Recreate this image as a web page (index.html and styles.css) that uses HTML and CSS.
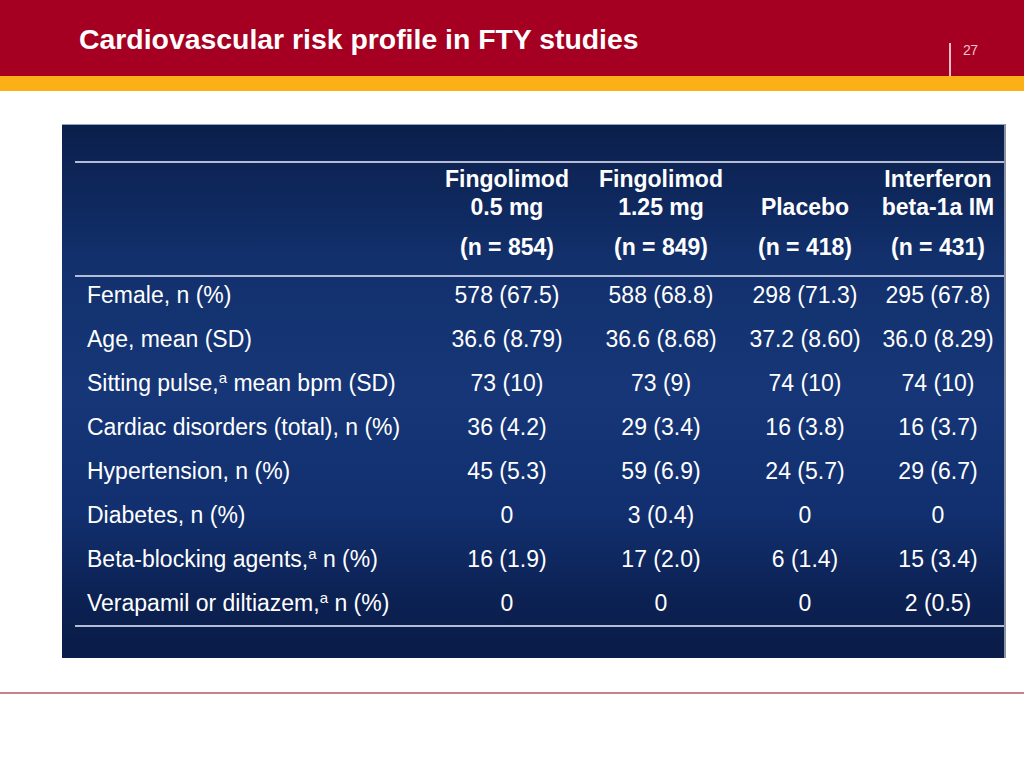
FILE: index.html
```html
<!DOCTYPE html>
<html lang="en">
<head>
<meta charset="utf-8">
<title>Cardiovascular risk profile in FTY studies</title>
<link rel="stylesheet" href="styles.css">
</head>
<body>
<header class="header">
  <h1 class="title">Cardiovascular risk profile in FTY studies</h1>
  <div class="pageno">27</div>
</header>
<div class="band"></div>
<main class="main">
  <section class="panel">
    <div class="table">
      <div class="row head">
        <div class="cell label"></div>
        <div class="cell hcell"><div class="hname">Fingolimod<br>0.5 mg</div><div class="hn">(n = 854)</div></div>
        <div class="cell hcell"><div class="hname">Fingolimod<br>1.25 mg</div><div class="hn">(n = 849)</div></div>
        <div class="cell hcell"><div class="hname">Placebo</div><div class="hn">(n = 418)</div></div>
        <div class="cell hcell"><div class="hname">Interferon<br>beta-1a IM</div><div class="hn">(n = 431)</div></div>
      </div>
      <div class="body">
        <div class="row"><div class="cell label">Female, n (%)</div><div class="cell">578 (67.5)</div><div class="cell">588 (68.8)</div><div class="cell">298 (71.3)</div><div class="cell">295 (67.8)</div></div>
        <div class="row"><div class="cell label">Age, mean (SD)</div><div class="cell">36.6 (8.79)</div><div class="cell">36.6 (8.68)</div><div class="cell">37.2 (8.60)</div><div class="cell">36.0 (8.29)</div></div>
        <div class="row"><div class="cell label">Sitting pulse,<sup>a</sup> mean bpm (SD)</div><div class="cell">73 (10)</div><div class="cell">73 (9)</div><div class="cell">74 (10)</div><div class="cell">74 (10)</div></div>
        <div class="row"><div class="cell label">Cardiac disorders (total), n (%)</div><div class="cell">36 (4.2)</div><div class="cell">29 (3.4)</div><div class="cell">16 (3.8)</div><div class="cell">16 (3.7)</div></div>
        <div class="row"><div class="cell label">Hypertension, n (%)</div><div class="cell">45 (5.3)</div><div class="cell">59 (6.9)</div><div class="cell">24 (5.7)</div><div class="cell">29 (6.7)</div></div>
        <div class="row"><div class="cell label">Diabetes, n (%)</div><div class="cell">0</div><div class="cell">3 (0.4)</div><div class="cell">0</div><div class="cell">0</div></div>
        <div class="row"><div class="cell label">Beta-blocking agents,<sup>a</sup> n (%)</div><div class="cell">16 (1.9)</div><div class="cell">17 (2.0)</div><div class="cell">6 (1.4)</div><div class="cell">15 (3.4)</div></div>
        <div class="row"><div class="cell label">Verapamil or diltiazem,<sup>a</sup> n (%)</div><div class="cell">0</div><div class="cell">0</div><div class="cell">0</div><div class="cell">2 (0.5)</div></div>
      </div>
    </div>
  </section>
</main>
<div class="footline"></div>
</body>
</html>
```

FILE: styles.css
```css
html, body {
  margin: 0;
  padding: 0;
  background: #ffffff;
}
body {
  width: 1024px;
  font-family: "Liberation Sans", Arial, sans-serif;
}
.header {
  height: 76px;
  background: #a50022;
  display: flex;
  box-sizing: border-box;
}
.title {
  margin: 0;
  padding: 23px 0 0 79px;
  flex: 1;
  font-size: 28.4px;
  line-height: 32px;
  font-weight: bold;
  color: #ffffff;
}
.pageno {
  margin: 43px 47px 0 0;
  border-left: 2px solid #f2bcc6;
  width: 28px;
  box-sizing: border-box;
  padding-left: 12px;
  padding-top: 1px;
  font-size: 14px;
  line-height: 12px;
  letter-spacing: -0.5px;
  color: #f2c4cc;
}
.band {
  height: 15px;
  background: #fcb018;
}
.main {
  padding: 33px 0 0 62px;
}
.panel {
  width: 944px;
  height: 534px;
  box-sizing: border-box;
  border-top: 1px solid #8ea2c8;
  border-right: 2px solid #8b93a6;
  padding: 36px 0 0 13px;
  background: linear-gradient(to bottom, #0b1f4b 0%, #12306c 25%, #163677 50%, #123070 72%, #0c2254 88%, #0a1c47 100%);
  color: #ffffff;
}
.table {
  border-top: 2px solid #b3bed6;
  border-bottom: 2px solid #b3bed6;
}
.row {
  display: grid;
  grid-template-columns: 355px 154px 154px 134px 1fr;
}
.head {
  border-bottom: 2px solid #b3bed6;
  padding: 2px 0 14px;
  font-weight: bold;
  font-size: 23px;
}
.hcell {
  display: flex;
  flex-direction: column;
  align-items: center;
  text-align: center;
}
.hname {
  height: 56px;
  line-height: 28px;
  display: flex;
  flex-direction: column;
  justify-content: flex-end;
  white-space: nowrap;
}
.hn {
  margin-top: 12px;
  line-height: 28px;
  white-space: nowrap;
}
.body .row {
  font-size: 23px;
  line-height: 36px;
  padding-bottom: 8px;
}
.body .row:last-child {
  padding-bottom: 4px;
}
.cell {
  text-align: center;
  white-space: nowrap;
}
.cell.label {
  text-align: left;
  padding-left: 12px;
}
sup {
  font-size: 15px;
  line-height: 0;
  vertical-align: 8px;
}
.footline {
  margin-top: 34px;
  height: 2px;
  background: #c9808b;
}
```
